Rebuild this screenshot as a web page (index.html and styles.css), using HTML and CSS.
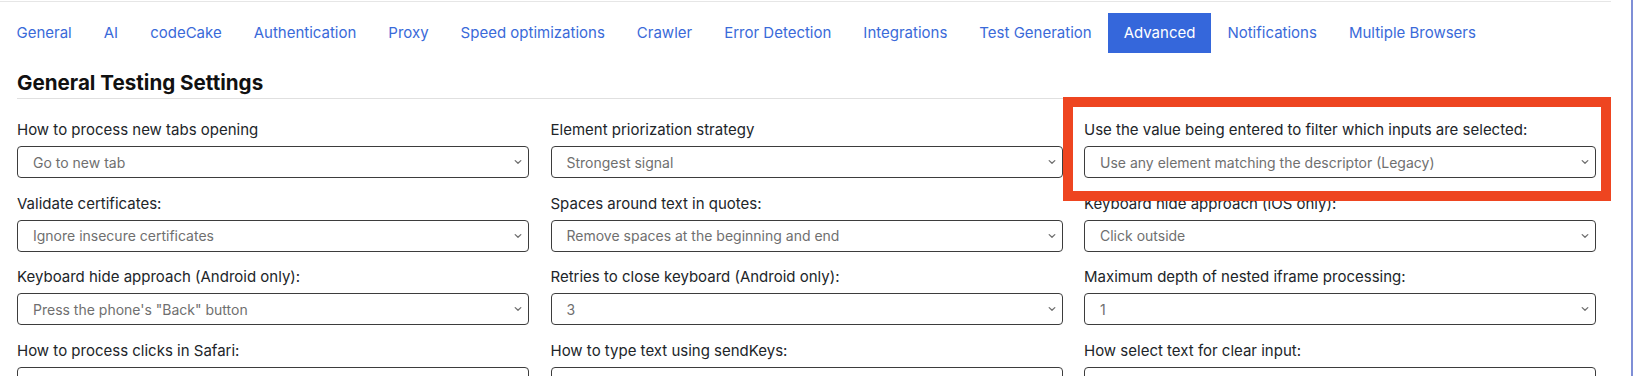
FILE: index.html
```html
<!DOCTYPE html>
<html lang="en">
<head>
<meta charset="utf-8">
<title>Advanced settings</title>
<link rel="stylesheet" href="styles.css">
</head>
<body>
<div class="app">
  <div class="panel">
    <nav class="tabs">
      <a class="tab">General</a>
      <a class="tab">AI</a>
      <a class="tab">codeCake</a>
      <a class="tab">Authentication</a>
      <a class="tab">Proxy</a>
      <a class="tab">Speed optimizations</a>
      <a class="tab">Crawler</a>
      <a class="tab">Error Detection</a>
      <a class="tab">Integrations</a>
      <a class="tab">Test Generation</a>
      <a class="tab active">Advanced</a>
      <a class="tab">Notifications</a>
      <a class="tab">Multiple Browsers</a>
    </nav>
    <h2 class="section-title">General Testing Settings</h2>
    <div class="grid">
      <div class="field">
        <div class="label">How to process new tabs opening</div>
        <div class="select"><span>Go to new tab</span><svg class="chev" width="8" height="6" viewBox="0 0 8 6"><path d="M1.2 1.6 L4 4.3 L6.8 1.6" fill="none" stroke="#707070" stroke-width="1.3" stroke-linecap="round" stroke-linejoin="round"/></svg></div>
      </div>
      <div class="field">
        <div class="label">Element priorization strategy</div>
        <div class="select"><span>Strongest signal</span><svg class="chev" width="8" height="6" viewBox="0 0 8 6"><path d="M1.2 1.6 L4 4.3 L6.8 1.6" fill="none" stroke="#707070" stroke-width="1.3" stroke-linecap="round" stroke-linejoin="round"/></svg></div>
      </div>
      <div class="field">
        <div class="label">Use the value being entered to filter which inputs are selected:</div>
        <div class="select"><span>Use any element matching the descriptor (Legacy)</span><svg class="chev" width="8" height="6" viewBox="0 0 8 6"><path d="M1.2 1.6 L4 4.3 L6.8 1.6" fill="none" stroke="#707070" stroke-width="1.3" stroke-linecap="round" stroke-linejoin="round"/></svg></div>
      </div>

      <div class="field">
        <div class="label">Validate certificates:</div>
        <div class="select"><span>Ignore insecure certificates</span><svg class="chev" width="8" height="6" viewBox="0 0 8 6"><path d="M1.2 1.6 L4 4.3 L6.8 1.6" fill="none" stroke="#707070" stroke-width="1.3" stroke-linecap="round" stroke-linejoin="round"/></svg></div>
      </div>
      <div class="field">
        <div class="label">Spaces around text in quotes:</div>
        <div class="select"><span>Remove spaces at the beginning and end</span><svg class="chev" width="8" height="6" viewBox="0 0 8 6"><path d="M1.2 1.6 L4 4.3 L6.8 1.6" fill="none" stroke="#707070" stroke-width="1.3" stroke-linecap="round" stroke-linejoin="round"/></svg></div>
      </div>
      <div class="field">
        <div class="label">Keyboard hide approach (iOS only):</div>
        <div class="select"><span>Click outside</span><svg class="chev" width="8" height="6" viewBox="0 0 8 6"><path d="M1.2 1.6 L4 4.3 L6.8 1.6" fill="none" stroke="#707070" stroke-width="1.3" stroke-linecap="round" stroke-linejoin="round"/></svg></div>
      </div>

      <div class="field">
        <div class="label">Keyboard hide approach (Android only):</div>
        <div class="select"><span>Press the phone's "Back" button</span><svg class="chev" width="8" height="6" viewBox="0 0 8 6"><path d="M1.2 1.6 L4 4.3 L6.8 1.6" fill="none" stroke="#707070" stroke-width="1.3" stroke-linecap="round" stroke-linejoin="round"/></svg></div>
      </div>
      <div class="field">
        <div class="label">Retries to close keyboard (Android only):</div>
        <div class="select"><span>3</span><svg class="chev" width="8" height="6" viewBox="0 0 8 6"><path d="M1.2 1.6 L4 4.3 L6.8 1.6" fill="none" stroke="#707070" stroke-width="1.3" stroke-linecap="round" stroke-linejoin="round"/></svg></div>
      </div>
      <div class="field">
        <div class="label">Maximum depth of nested iframe processing:</div>
        <div class="select"><span>1</span><svg class="chev" width="8" height="6" viewBox="0 0 8 6"><path d="M1.2 1.6 L4 4.3 L6.8 1.6" fill="none" stroke="#707070" stroke-width="1.3" stroke-linecap="round" stroke-linejoin="round"/></svg></div>
      </div>

      <div class="field">
        <div class="label">How to process clicks in Safari:</div>
        <div class="select"></div>
      </div>
      <div class="field">
        <div class="label">How to type text using sendKeys:</div>
        <div class="select"></div>
      </div>
      <div class="field">
        <div class="label">How select text for clear input:</div>
        <div class="select"></div>
      </div>
    </div>
    <div class="highlight"></div>
  </div>
  <div class="edge"></div>
</div>
</body>
</html>
```
FILE: styles.css
```css
* { box-sizing: border-box; }
html, body { margin: 0; padding: 0; background: #ffffff; }
body {
  font-family: Inter, "Noto Sans", "Liberation Sans", sans-serif;
  color: #212529;
  overflow: hidden;
}
.app {
  display: flex;
  height: 376px;
  padding-top: 1px;
  overflow: hidden;
}
.panel {
  position: relative;
  width: 1611px;
  flex: none;
  border-top: 1px solid #e6e6e6;
  padding-left: 17px;
}
.edge {
  margin-left: auto;
  margin-top: -1px;
  width: 2px;
  flex: none;
  background: #7f8fd6;
}
.tabs {
  display: flex;
  margin: 10.5px 0 0 -16.5px;
}
.tab {
  padding: 10px 16px;
  font-size: 15px;
  line-height: 20.5px;
  color: #3a6ad9;
  white-space: nowrap;
  cursor: pointer;
}
.tab.active {
  background: #3567db;
  color: #ffffff;
}
.section-title {
  margin: 18px 0 0 0;
  padding-bottom: 3px;
  border-bottom: 1px solid #e0e0e0;
  font-size: 20.6px;
  line-height: 24px;
  font-weight: 700;
  color: #111111;
}
.grid {
  display: grid;
  grid-template-columns: repeat(3, 1fr);
  column-gap: 21.5px;
  row-gap: 14.6px;
  margin-top: 20px;
  padding-right: 15px;
}
.field {
  display: flex;
  flex-direction: column;
}
.label {
  font-size: 15px;
  line-height: 22px;
  color: #212529;
  white-space: nowrap;
}
.select {
  margin-top: 5px;
  height: 32px;
  border: 1px solid #3d3d3d;
  border-radius: 4px;
  padding: 0 6px 0 15px;
  display: flex;
  align-items: center;
  justify-content: space-between;
  font-size: 14px;
  color: #6f6f6f;
  white-space: nowrap;
}
.chev { flex: none; }
.highlight {
  position: absolute;
  left: 1062.5px;
  right: 0;
  top: 95px;
  height: 103.5px;
  border: 10px solid #ee4520;
  pointer-events: none;
}
```
